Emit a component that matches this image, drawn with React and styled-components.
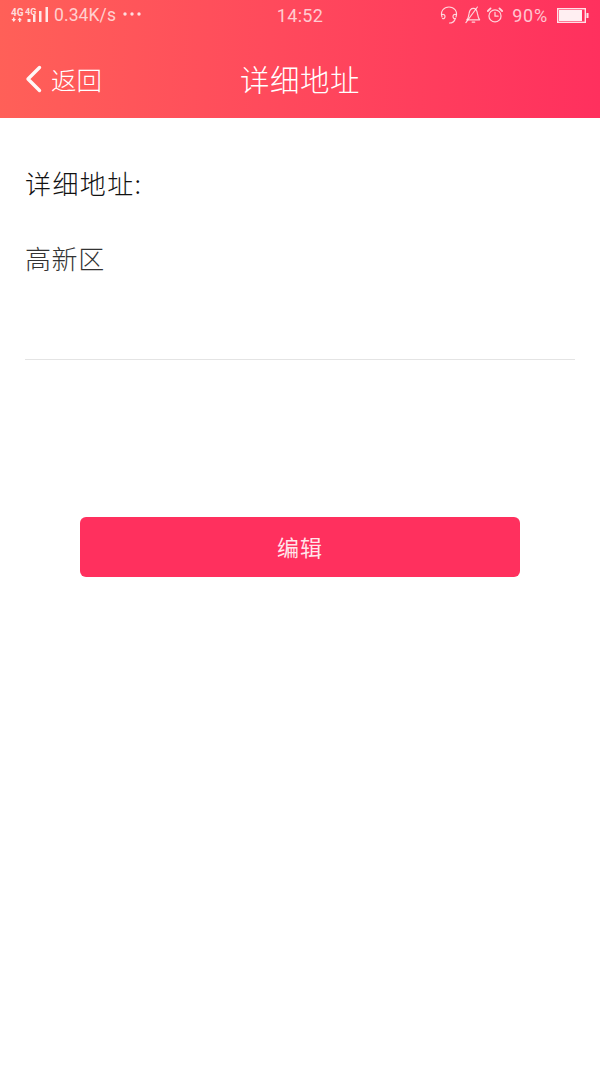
import React from "react";
import styled, { createGlobalStyle } from "styled-components";

const Global = createGlobalStyle`
  html, body { margin: 0; padding: 0; background: #fff; }
  body { font-family: "Noto Sans CJK SC", "Liberation Sans", sans-serif; }
`;
const Page = styled.div`
  width: 600px; height: 1067px; background: #fff; overflow: hidden;
  display: flex; flex-direction: column;
`;
const Header = styled.header`
  height: 118px; box-sizing: border-box; color: #fff;
  background: linear-gradient(92deg, #ff6058 0%, #ff4a5c 45%, #ff305e 100%);
`;
const StatusBar = styled.div`
  height: 30px; box-sizing: border-box; padding: 0 10px 0 10px;
  display: grid; grid-template-columns: 1fr auto 1fr; align-items: center;
  color: rgba(255,255,255,.72);
  font-family: "Roboto", "Liberation Sans", sans-serif; font-size: 17.5px;
`;
const StatusLeft = styled.div`display: flex; align-items: center;`;
const StatusRight = styled.div`display: flex; align-items: center; justify-content: flex-end; gap: 6px;`;
const Clock = styled.span`font-size: 18px; letter-spacing: .3px;`;
const Network = styled.div`position: relative; width: 38px; height: 16px; margin-right: 6px;`;
const NetLabel = styled.span`
  position: absolute; top: ${p => p.$top}px; left: ${p => p.$left}px;
  font-size: ${p => p.$size}px; line-height: 9px; font-weight: 700; color: rgba(255,255,255,.8);
`;
const Speed = styled.span`margin-right: 6px; letter-spacing: .1px;`;
const Percent = styled.span`margin: 0 3px; font-size: 18px; letter-spacing: .8px;`;
const Nav = styled.nav`
  height: 88px; box-sizing: border-box; padding: 9px 25px 0;
  display: grid; grid-template-columns: 1fr auto 1fr; align-items: center;
`;
const Back = styled.div`
  display: flex; align-items: center; gap: 8px; font-size: 25.5px; font-weight: 300; color: #fff;
  line-height: 1;
`;
const Title = styled.h1`margin: 0; font-size: 29.5px; font-weight: 300; line-height: 1; letter-spacing: .5px;`;
const Content = styled.main`padding: 0 25px; display: flex; flex-direction: column;`;
const Label = styled.div`
  margin-top: 48px; font-size: 26px; font-weight: 300; line-height: 34px; color: #111; letter-spacing: 1.4px;
`;
const Value = styled.div`
  margin-top: 41px; height: 119px; box-sizing: border-box; font-size: 26px; font-weight: 300; line-height: 34px; color: #333;
  letter-spacing: .6px;
  border-bottom: 1px solid #e4e4e4;
`;
const Edit = styled.button`
  align-self: center; margin-top: 157px; width: 440px; height: 60px;
  border: 0; border-radius: 6px; background: #ff305e; color: rgba(255,255,255,.88);
  font: 400 22px "Noto Sans CJK SC", sans-serif; letter-spacing: 1px; padding: 0 0 3px;
`;

const Signal = () => (
  <svg width="38" height="16" viewBox="0 0 38 16" style={{position:"absolute",left:0,top:0}} fill="rgba(255,255,255,.85)">
    <path d="M3 10.500h1.500v1.500H6l-2.200 3-2.300-3H3zM9 15v-1.700H7.500L9.700 10.500 12 13.300h-1.500V15z" />
    <rect x="17.500" y="12" width="3" height="3" />
    <rect x="23" y="8" width="2.500" height="7" />
    <rect x="29" y="4" width="2.500" height="11" />
    <rect x="35.500" y="0" width="2.500" height="15" />
  </svg>
);
const Headset = () => (
  <svg width="20" height="20" viewBox="0 0 20 20" fill="none" stroke="rgba(255,255,255,.78)" strokeWidth="1.200" strokeLinecap="round">
    <path d="M3 12C1 6 5 2 10 2s9 4 7 10" />
    <path d="M3 9.500c2-.5 3 .5 3 2s-1 2.500-2.500 2M17 9.500c-2-.5-3 .5-3 2s1 2.500 2.500 2" />
    <path d="M16 14.500c-1 2.500-3 3.500-5.500 3.500" />
  </svg>
);
const Bell = () => (
  <svg width="16" height="20" viewBox="0 0 18 20" fill="none" stroke="rgba(255,255,255,.78)" strokeWidth="1.300" strokeLinecap="round" strokeLinejoin="round">
    <path d="M2 15.500c2-2 2-4 2.500-7C5 5 7 2.500 9.500 2.500 12 2.500 13.500 5 14 8.500c.5 3 1 5 2.500 7z" />
    <path d="M8 18h3" />
    <path d="M1 18.500 14 1" />
  </svg>
);
const Alarm = () => (
  <svg width="16" height="16" viewBox="0 0 18 18" fill="none" stroke="rgba(255,255,255,.78)" strokeWidth="1.400" strokeLinecap="round">
    <circle cx="9" cy="10" r="6.800" />
    <path d="M9 6v4.300h3.500" />
    <path d="M1 4.500 4 1.500M17 4.500l-3-3" strokeWidth="2" />
  </svg>
);
const Battery = () => (
  <svg width="32" height="15" viewBox="0 0 32 15" style={{marginRight:1}}>
    <rect x=".7" y=".7" width="27.600" height="13.600" fill="none" stroke="rgba(255,255,255,.85)" strokeWidth="1.400" />
    <rect x="2" y="2" width="23" height="11" fill="rgba(255,255,255,.92)" />
    <rect x="29.500" y="5" width="2" height="5" fill="rgba(255,255,255,.85)" />
  </svg>
);
const Dots = () => (
  <svg width="20" height="6" viewBox="0 0 20 6" fill="rgba(255,255,255,.8)" style={{marginBottom:3}}>
    <circle cx="3" cy="3" r="1.700" /><circle cx="10" cy="3" r="1.700" /><circle cx="17" cy="3" r="1.700" />
  </svg>
);
const Chevron = () => (
  <svg width="18" height="28" viewBox="0 0 18 28" fill="none" stroke="rgba(255,255,255,.95)" strokeWidth="3.400" strokeLinecap="round" strokeLinejoin="round">
    <path d="M14.500 2.500 3 14l11.500 11.500" />
  </svg>
);

export default function App() {
  return (
    <Page>
      <Global />
      <Header>
        <StatusBar>
          <StatusLeft>
            <Network>
              <NetLabel $top={1} $left={1} $size={10}>4G</NetLabel>
              <NetLabel $top={1} $left={15} $size={9}>4G</NetLabel>
              <Signal />
            </Network>
            <Speed>0.34K/s</Speed>
            <Dots />
          </StatusLeft>
          <Clock>14:52</Clock>
          <StatusRight>
            <Headset />
            <Bell />
            <Alarm />
            <Percent>90%</Percent>
            <Battery />
          </StatusRight>
        </StatusBar>
        <Nav>
          <Back><Chevron />返回</Back>
          <Title>详细地址</Title>
          <span />
        </Nav>
      </Header>
      <Content>
        <Label>详细地址:</Label>
        <Value>高新区</Value>
        <Edit>编辑</Edit>
      </Content>
    </Page>
  );
}
